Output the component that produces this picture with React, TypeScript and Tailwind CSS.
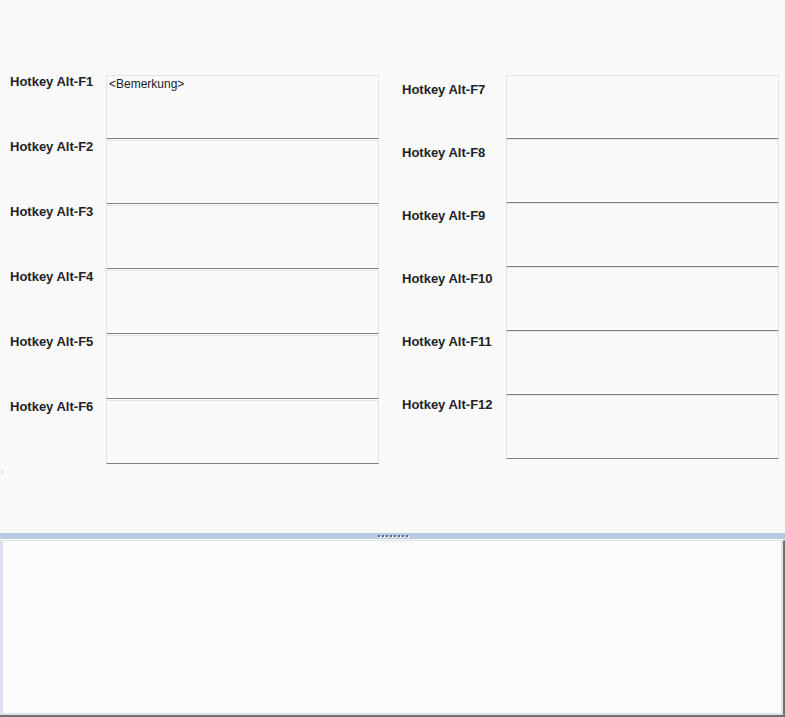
import React from "react";

const leftKeys = ["F1", "F2", "F3", "F4", "F5", "F6"];
const rightKeys = ["F7", "F8", "F9", "F10", "F11", "F12"];

const fieldBox =
  "w-[273px] h-[64px] border border-[#e4e4e4] border-b-[#808080] bg-[#fafafa] px-[2px] pt-[1px] text-[12px] leading-[14px] text-[#1a1a2a]";

function Label({ name }: { name: string }) {
  return (
    <div className="text-[13px] leading-[16px] font-bold text-[#222] whitespace-nowrap">
      Hotkey Alt-{name}
    </div>
  );
}

export default function App() {
  return (
    <div
      className="w-[785px] h-[717px] bg-[#fafafa] flex flex-col overflow-hidden"
      style={{ fontFamily: '"Liberation Sans", Arial, sans-serif' }}
    >
      <div className="relative h-[533px] flex pt-[75px] pl-[10px]">
        {/* left column: label beside each field */}
        <div className="flex flex-col">
          {leftKeys.map((k, i) => (
            <div key={k} className="flex h-[65px]">
              <div className="w-[96px] -mt-[1px]">
                <Label name={k} />
              </div>
              <div className={fieldBox}>{i === 0 ? "<Bemerkung>" : ""}</div>
            </div>
          ))}
        </div>

        {/* right column: labels run on their own pitch */}
        <div className="flex ml-[23px]">
          <div className="w-[104px] flex flex-col pt-[7px]">
            {rightKeys.map((k) => (
              <div key={k} className="h-[63px]">
                <Label name={k} />
              </div>
            ))}
          </div>
          <div className="flex flex-col">
            {rightKeys.map((k) => (
              <div key={k} className={fieldBox} />
            ))}
          </div>
        </div>

        <div className="absolute left-[2px] top-[471px] w-[1px] h-[2px] bg-[#a9bde0]" />
      </div>

      {/* splitter */}
      <div className="h-[6px] bg-[#b8cbe3] flex items-center justify-center gap-[2px]">
        {Array.from({ length: 8 }).map((_, i) => (
          <div key={i} className="w-[2px] h-[2px] bg-[#5a6e8c] shadow-[1px_1px_0_#ffffff]" />
        ))}
      </div>
      <div className="h-[1px] bg-[#fafafa]" />

      {/* lower panel */}
      <div className="flex-1 border-t border-[#dfe3ea] border-r-2 border-r-[#707070] border-b-2 border-b-[#707070]">
        <div className="h-full border-l-[3px] border-r-2 border-b-2 border-[#dde3ee] bg-[#fbfbfc]" />
      </div>
    </div>
  );
}
